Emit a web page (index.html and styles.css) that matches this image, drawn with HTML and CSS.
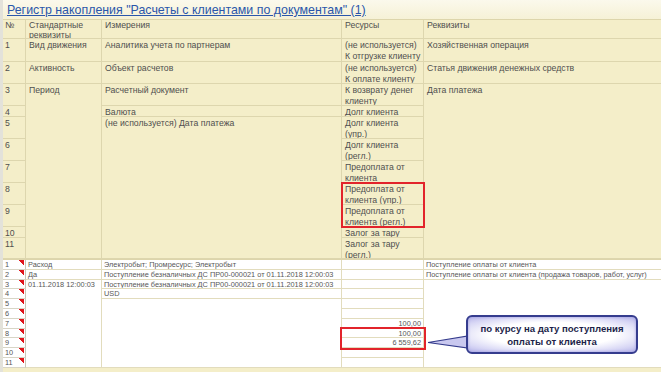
FILE: index.html
```html
<!DOCTYPE html>
<html lang="ru">
<head>
<meta charset="utf-8">
<title>Регистр накопления</title>
<link rel="stylesheet" href="styles.css">
</head>
<body>
<div class="page">
  <div class="title"><span class="title-link">Регистр накопления "Расчеты с клиентами по документам" (1)</span></div>

  <div class="grid top">
    <div class="cell c1 head">№</div>
    <div class="cell c2 head">Стандартные<br>реквизиты</div>
    <div class="cell c3 head">Измерения</div>
    <div class="cell c4 head">Ресурсы</div>
    <div class="cell c5 head">Реквизиты</div>

    <div class="cell c1">1</div>
    <div class="cell c2">Вид движения</div>
    <div class="cell c3">Аналитика учета по партнерам</div>
    <div class="cell c4">(не используется)<br>К отгрузке клиенту</div>
    <div class="cell c5">Хозяйственная операция</div>

    <div class="cell c1">2</div>
    <div class="cell c2">Активность</div>
    <div class="cell c3">Объект расчетов</div>
    <div class="cell c4">(не используется)<br>К оплате клиенту</div>
    <div class="cell c5">Статья движения денежных средств</div>

    <div class="cell c1">3</div>
    <div class="cell c2 span9">Период</div>
    <div class="cell c3">Расчетный документ</div>
    <div class="cell c4">К возврату денег<br>клиенту</div>
    <div class="cell c5 span9">Дата платежа</div>

    <div class="cell c1">4</div>
    <div class="cell c3">Валюта</div>
    <div class="cell c4">Долг клиента</div>

    <div class="cell c1">5</div>
    <div class="cell c3 span7">(не используется) Дата платежа</div>
    <div class="cell c4">Долг клиента<br>(упр.)</div>

    <div class="cell c1">6</div>
    <div class="cell c4">Долг клиента<br>(регл.)</div>

    <div class="cell c1">7</div>
    <div class="cell c4">Предоплата от<br>клиента</div>

    <div class="cell c1">8</div>
    <div class="redgroup c4">
      <div class="cell">Предоплата от<br>клиента (упр.)</div>
      <div class="cell">Предоплата от<br>клиента (регл.)</div>
    </div>

    <div class="cell c1">9</div>

    <div class="cell c1">10</div>
    <div class="cell c4">Залог за тару</div>

    <div class="cell c1">11</div>
    <div class="cell c4">Залог за тару<br>(регл.)</div>
  </div>

  <div class="grid low">
    <div class="cell c1 mark">1</div>
    <div class="cell c2">Расход</div>
    <div class="cell c3">Электробыт; Промресурс; Электробыт</div>
    <div class="cell c4 num"></div>
    <div class="cell c5">Поступление оплаты от клиента</div>

    <div class="cell c1 mark">2</div>
    <div class="cell c2">Да</div>
    <div class="cell c3">Поступление безналичных ДС ПР00-000021 от 01.11.2018 12:00:03</div>
    <div class="cell c4 num"></div>
    <div class="cell c5">Поступление оплаты от клиента (продажа товаров, работ, услуг)</div>

    <div class="cell c1 mark">3</div>
    <div class="cell c2 span9">01.11.2018 12:00:03</div>
    <div class="cell c3">Поступление безналичных ДС ПР00-000021 от 01.11.2018 12:00:03</div>
    <div class="cell c4 num"></div>
    <div class="cell c5 span9"></div>

    <div class="cell c1 mark">4</div>
    <div class="cell c3">USD</div>
    <div class="cell c4 num"></div>

    <div class="cell c1 mark">5</div>
    <div class="cell c3 span7"></div>
    <div class="cell c4 num"></div>

    <div class="cell c1 mark">6</div>
    <div class="cell c4 num"></div>

    <div class="cell c1 mark">7</div>
    <div class="cell c4 num">100,00</div>

    <div class="cell c1 mark">8</div>
    <div class="redgroup c4">
      <div class="cell num">100,00</div>
      <div class="cell num">6 559,62</div>
    </div>

    <div class="cell c1 mark">9</div>

    <div class="cell c1 mark">10</div>
    <div class="cell c4 num"></div>

    <div class="cell c1 mark">11</div>
    <div class="cell c4 num"></div>
  </div>
  <div class="bottom-band"></div>

  <svg class="tail" width="42" height="16" viewBox="0 0 42 16">
    <polygon points="0,8.5 40,2 40,14" fill="#c9c8ef" stroke="#343b8c" stroke-width="1.2"/>
  </svg>
  <div class="callout">по курсу на дату поступления<br>оплаты от клиента</div>
</div>
</body>
</html>
```

FILE: styles.css
```css
html, body {
  margin: 0;
  padding: 0;
}
body {
  width: 661px;
  height: 372px;
  overflow: hidden;
  background: #f4eec9;
  font-family: Arial, "Liberation Sans", sans-serif;
}
.page {
  position: relative;
  width: 661px;
  height: 372px;
  box-sizing: border-box;
  border-left: 3px solid #e3e2da;
}
.title {
  height: 20px;
  box-sizing: border-box;
  padding: 2px 0 0 4px;
  background: linear-gradient(#fbf9ec, #f6f1d6);
  border-bottom: 1px solid #ddd5ab;
  font-size: 12.4px;
  line-height: 16px;
  white-space: nowrap;
}
.title-link {
  color: #2a56ab;
  text-decoration: underline;
}
.grid {
  display: grid;
  grid-template-columns: 23px 76px 240px 82px 1fr;
}
.top {
  grid-template-rows: 19px 23px 22px 22px 11px 22px 22px 22px 22px 22px 11px 21px;
  background: #f4eec9;
  font-size: 8.7px;
  line-height: 10.8px;
  color: #4f4f4f;
}
.top .head {
  padding-top: 0;
  line-height: 10px;
}
.low {
  grid-template-rows: repeat(11, 9.8px);
  background: #ffffff;
  border-top: 1px solid #ddd5ab;
  font-size: 7.35px;
  line-height: 9.4px;
  color: #575757;
}
.cell {
  box-sizing: border-box;
  border-right: 1px solid #ddd6ae;
  border-bottom: 1px solid #ddd6ae;
  padding: 1px 2px 0 3px;
  white-space: nowrap;
  overflow: hidden;
  min-width: 0;
}
.low .cell {
  padding: 0 2px 0 2px;
  border-color: #e2dcbd;
}
.c1 { grid-column: 1; padding-left: 2px; }
.c2 { grid-column: 2; }
.c3 { grid-column: 3; }
.c4 { grid-column: 4; }
.c5 { grid-column: 5; border-right: none; }
.span9 { grid-row-end: span 9; }
.span7 { grid-row-end: span 7; }
.low .c1 {
  border-right-color: #c9c6b6;
  border-bottom-color: #d8d5c6;
}
.mark {
  background: linear-gradient(to bottom left, #e0141b 50%, transparent 51%) no-repeat right 1px top 0 / 5px 5px;
}
.num {
  text-align: right;
}
.redgroup {
  grid-row-end: span 2;
  display: grid;
  grid-template-rows: 1fr 1fr;
  position: relative;
  outline: 2px solid #e2242b;
  outline-offset: -1px;
  min-width: 0;
}
.low .redgroup {
  outline-offset: 0;
}
.bottom-band {
  height: 4px;
  background: #f4eec9;
}
.tail {
  position: absolute;
  left: 425px;
  top: 334px;
}
.callout {
  position: absolute;
  left: 463px;
  top: 315px;
  width: 172px;
  height: 39px;
  box-sizing: border-box;
  border: 2px solid #353c8e;
  border-radius: 6px;
  background: radial-gradient(ellipse 75% 70% at 50% 50%, #ffffff 50%, #d8d7f5 78%, #b3b1e8 100%);
  box-shadow: inset 0 0 3px #9e9ce0;
  color: #1d1f4a;
  font-weight: bold;
  font-size: 9.6px;
  line-height: 13px;
  text-align: center;
  padding-top: 5px;
}
```
